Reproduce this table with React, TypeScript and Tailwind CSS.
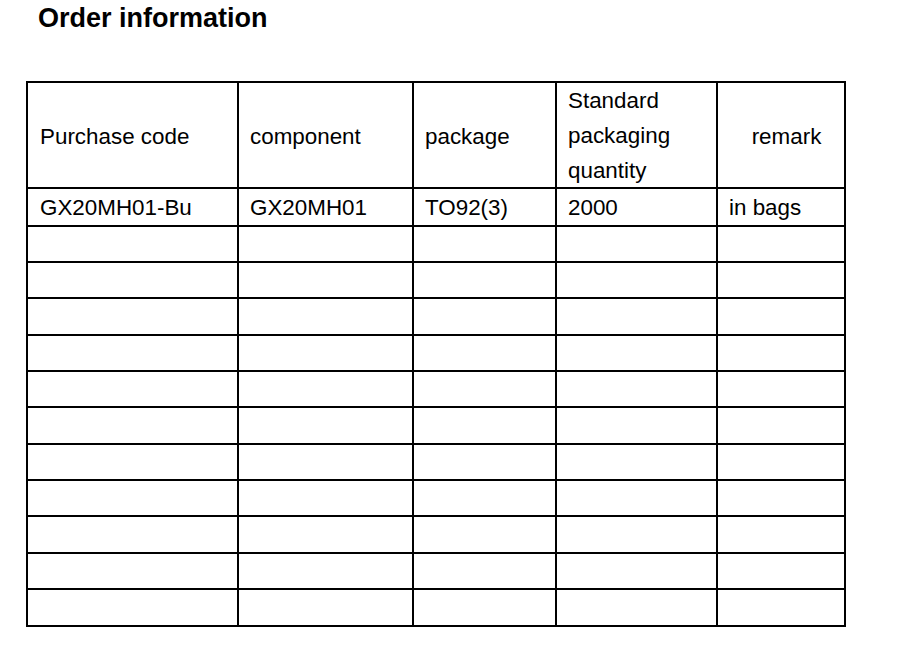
import React from 'react';

const colWidths = ['w-[211px]', 'w-[175px]', 'w-[143px]', 'w-[161px]', 'w-[128px]'];

// row heights (incl. bottom border) for the blank rows below the data row
const blankRows = [36, 36, 37, 36, 36, 37, 36, 36, 37, 36, 37];

const rowHeight: Record<number, string> = {
  36: 'h-[36px]',
  37: 'h-[37px]',
};

export default function App() {
  return (
    <main className="min-h-screen w-[900px] h-[656px] bg-white text-black font-['Liberation_Sans',Arial,sans-serif]">
      <h1 className="pl-[38px] h-[36px] leading-[36px] text-[27px] font-bold">Order information</h1>

      <div className="ml-[26px] mt-[45px] w-fit border-l-2 border-t-2 border-black text-[22.4px]">
        {/* header */}
        <div className="flex h-[106px]">
          <div className={`${colWidths[0]} border-r-2 border-b-2 border-black flex items-center pl-[12px] pt-[3px]`}>Purchase code</div>
          <div className={`${colWidths[1]} border-r-2 border-b-2 border-black flex items-center pl-[11px] pt-[3px]`}>component</div>
          <div className={`${colWidths[2]} border-r-2 border-b-2 border-black flex items-center pl-[11px] pt-[3px]`}>package</div>
          <div className={`${colWidths[3]} border-r-2 border-b-2 border-black flex flex-col justify-center pl-[11px] leading-[35px]`}>
            <span>Standard</span>
            <span>packaging</span>
            <span>quantity</span>
          </div>
          <div className={`${colWidths[4]} border-r-2 border-b-2 border-black flex items-center justify-center pl-[11px] pt-[3px]`}>remark</div>
        </div>

        {/* data row */}
        <div className="flex h-[38px]">
          <div className={`${colWidths[0]} border-r-2 border-b-2 border-black flex items-center pl-[12px] pt-[2px]`}>GX20MH01-Bu</div>
          <div className={`${colWidths[1]} border-r-2 border-b-2 border-black flex items-center pl-[11px] pt-[2px]`}>GX20MH01</div>
          <div className={`${colWidths[2]} border-r-2 border-b-2 border-black flex items-center pl-[11px] pt-[2px]`}>TO92(3)</div>
          <div className={`${colWidths[3]} border-r-2 border-b-2 border-black flex items-center pl-[11px] pt-[2px]`}>2000</div>
          <div className={`${colWidths[4]} border-r-2 border-b-2 border-black flex items-center pl-[11px] pt-[2px]`}>in bags</div>
        </div>

        {blankRows.map((h, i) => (
          <div key={i} className={`flex ${rowHeight[h]}`}>
            {colWidths.map((w, j) => (
              <div key={j} className={`${w} border-r-2 border-b-2 border-black`} />
            ))}
          </div>
        ))}
      </div>
    </main>
  );
}
